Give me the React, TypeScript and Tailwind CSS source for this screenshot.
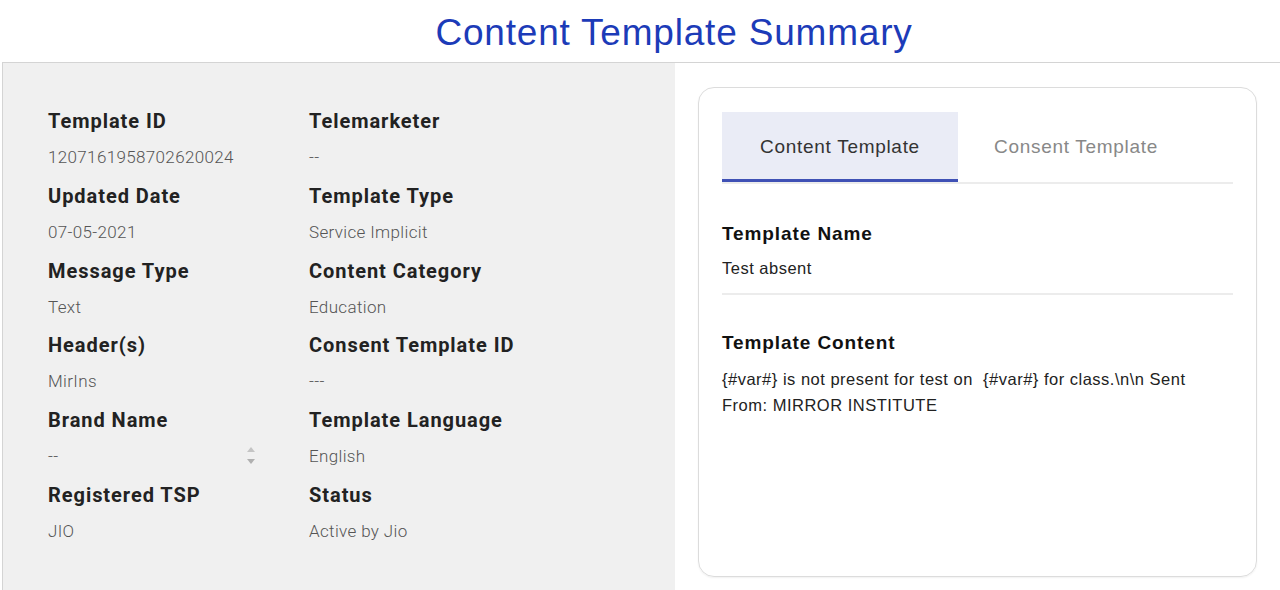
const fields: [string, string][][] = [
  [["Template ID", "1207161958702620024"], ["Telemarketer", "--"]],
  [["Updated Date", "07-05-2021"], ["Template Type", "Service Implicit"]],
  [["Message Type", "Text"], ["Content Category", "Education"]],
  [["Header(s)", "MirIns"], ["Consent Template ID", "---"]],
  [["Brand Name", "--"], ["Template Language", "English"]],
  [["Registered TSP", "JIO"], ["Status", "Active by Jio"]],
];

function Spinner() {
  return (
    <svg width="12" height="22" viewBox="0 0 12 22" className="absolute left-[197px] top-[39px]">
      <path d="M6 2 L10 7 L2 7 Z" fill="#c4c4c4" />
      <path d="M2 14 L10 14 L6 19 Z" fill="#b0b0b0" />
    </svg>
  );
}

export default function App() {
  return (
    <div className="w-[1280px] h-[590px] bg-white overflow-hidden font-['Roboto',sans-serif]">
      <h1 className="h-[62px] pl-[68px] pt-[2px] text-center text-[37px] tracking-[0.8px] leading-[62px] text-[#1c3bb8] font-['Liberation_Sans',Arial,sans-serif]">
        Content Template Summary
      </h1>
      <div className="ml-[2px] h-[528px] flex border-t border-l border-[#d4d4d4]">
        <div className="w-[672px] bg-[#f0f0f0] pl-[45px] pt-[44px]">
          {fields.map((row, i) => (
            <div key={i} className="relative flex h-[74.8px]">
              {row.map(([label, value], j) => (
                <div key={label} className={j === 0 ? "w-[261px]" : "flex-1"}>
                  <div className="text-[20px] leading-[28px] font-bold tracking-[0.95px] text-[#222]">{label}</div>
                  <div className="mt-[10px] text-[17px] leading-[24px] font-light tracking-[0.35px] text-[#555]">{value}</div>
                </div>
              ))}
              {i === 4 && <Spinner />}
            </div>
          ))}
        </div>
        <div className="flex-1 pl-[23px] pr-[23px] pt-[24px] pb-[12px]">
          <div className="h-[490px] rounded-[16px] border border-[#dcdcdc] shadow-[0_1px_2px_rgba(0,0,0,0.06)] px-[23px] pt-[24px] font-['Liberation_Sans',Arial,sans-serif]">
            <div className="flex border-b-2 border-[#ececec]">
              <div className="w-[236px] h-[70px] pt-[3px] bg-[#eaecf6] border-b-[3px] border-[#3f51b5] -mb-[2px] flex items-center justify-center text-[19px] tracking-[0.7px] text-[#333]">
                Content Template
              </div>
              <div className="w-[236px] h-[70px] pt-[1px] flex items-center justify-center text-[19px] tracking-[0.7px] text-[#888]">
                Consent Template
              </div>
            </div>
            <div className="pt-[38px] pb-[13px] border-b-2 border-[#ececec]">
              <div className="text-[19px] leading-[24px] font-bold tracking-[0.9px] text-[#111]">Template Name</div>
              <div className="mt-[10px] text-[16.5px] leading-[24px] tracking-[0.5px] text-[#222]">Test absent</div>
            </div>
            <div className="pt-[36px]">
              <div className="text-[19px] leading-[24px] font-bold tracking-[0.9px] text-[#111]">Template Content</div>
              <div className="mt-[11px] text-[16.5px] leading-[26px] tracking-[0.5px] text-[#222] whitespace-pre-wrap w-[490px]">
                {"{#var#} is not present for test on  {#var#} for class.\\n\\n Sent From: MIRROR INSTITUTE"}
              </div>
            </div>
          </div>
        </div>
      </div>
    </div>
  );
}
